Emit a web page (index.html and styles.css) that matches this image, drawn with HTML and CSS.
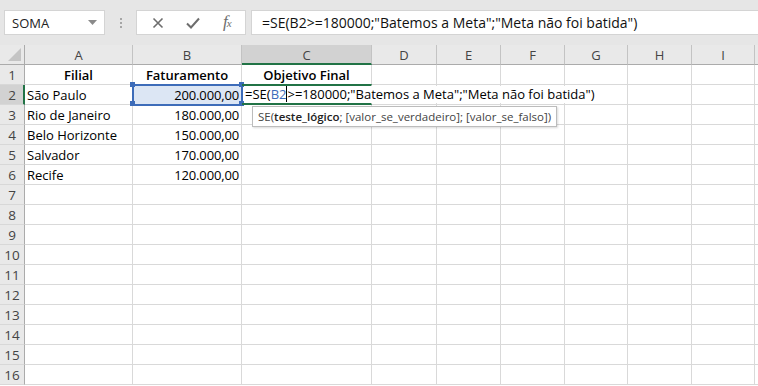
FILE: index.html
```html
<!doctype html>
<html lang="pt-BR">
  <head>
    <meta charset="UTF-8" />
    <title>Planilha - SE</title>
    <link rel="stylesheet" href="styles.css">
  </head>
  <body>
    <div class="app">
      <div class="toolbar">
        <div class="name-box">
          <span class="name-text">SOMA</span>
          <svg class="name-arrow" width="9" height="5" viewBox="0 0 9 5"><path d="M0 0h9L4.5 5z" fill="#8a8a8a"/></svg>
        </div>
        <div class="grip">
          <span></span><span></span><span></span>
        </div>
        <div class="fx-buttons">
          <svg class="fx-icon" width="12" height="12" viewBox="0 0 12 12"><path d="M1.5 1.5l9 9M10.5 1.5l-9 9" stroke="#6d6d6d" stroke-width="1.6" fill="none"/></svg>
          <svg class="fx-icon" width="14" height="12" viewBox="0 0 14 12"><path d="M1 6.5l4 4L13 1.5" stroke="#6d6d6d" stroke-width="2" fill="none"/></svg>
          <span class="fx-label">f<sub>x</sub></span>
        </div>
        <div class="formula-input">=SE(B2&gt;=180000;"Batemos a Meta";"Meta não foi batida")</div>
      </div>

      <div class="sheet">
        <div class="grid">
          <div class="hdr corner"><span class="corner-tri"></span></div>
          <div class="hdr col">A</div>
          <div class="hdr col">B</div>
          <div class="hdr col col-active">C</div>
          <div class="hdr col">D</div>
          <div class="hdr col">E</div>
          <div class="hdr col">F</div>
          <div class="hdr col">G</div>
          <div class="hdr col">H</div>
          <div class="hdr col">I</div>
          <div class="hdr col filler"></div>

          <div class="hdr row">1</div>
          <div class="cell bold center">Filial</div>
          <div class="cell bold center">Faturamento</div>
          <div class="cell bold center">Objetivo Final</div>
          <div class="cell"></div><div class="cell"></div><div class="cell"></div><div class="cell"></div><div class="cell"></div><div class="cell"></div><div class="cell"></div>

          <div class="hdr row row-active">2</div>
          <div class="cell">São Paulo</div>
          <div class="cell num ref-cell">200.000,00</div>
          <div class="cell edit-cell">
            <span class="edit-text">=SE(<span class="ref">B2</span><span class="caret"></span>&gt;=180000;"Batemos a Meta";"Meta não foi batida")</span>
            <div class="tooltip">SE(<b>teste_lógico</b>; [valor_se_verdadeiro]; [valor_se_falso])</div>
          </div>
          <div class="cell"></div><div class="cell"></div><div class="cell"></div><div class="cell"></div><div class="cell"></div><div class="cell"></div><div class="cell"></div>

          <div class="hdr row">3</div>
          <div class="cell">Rio de Janeiro</div>
          <div class="cell num">180.000,00</div>
          <div class="cell"></div><div class="cell"></div><div class="cell"></div><div class="cell"></div><div class="cell"></div><div class="cell"></div><div class="cell"></div><div class="cell"></div>

          <div class="hdr row">4</div>
          <div class="cell">Belo Horizonte</div>
          <div class="cell num">150.000,00</div>
          <div class="cell"></div><div class="cell"></div><div class="cell"></div><div class="cell"></div><div class="cell"></div><div class="cell"></div><div class="cell"></div><div class="cell"></div>

          <div class="hdr row">5</div>
          <div class="cell">Salvador</div>
          <div class="cell num">170.000,00</div>
          <div class="cell"></div><div class="cell"></div><div class="cell"></div><div class="cell"></div><div class="cell"></div><div class="cell"></div><div class="cell"></div><div class="cell"></div>

          <div class="hdr row">6</div>
          <div class="cell">Recife</div>
          <div class="cell num">120.000,00</div>
          <div class="cell"></div><div class="cell"></div><div class="cell"></div><div class="cell"></div><div class="cell"></div><div class="cell"></div><div class="cell"></div><div class="cell"></div>
        </div>
        <div class="grid empty-rows" id="emptyRows"></div>
      </div>
    </div>

    <script>
      // rows 7..16 are empty, build them instead of writing 100 divs
      const emptyRows = document.getElementById("emptyRows");
      for (let r = 7; r <= 16; r++) {
        const head = document.createElement("div");
        head.className = "hdr row";
        head.textContent = r;
        emptyRows.appendChild(head);
        for (let c = 0; c < 10; c++) {
          const cell = document.createElement("div");
          cell.className = "cell";
          emptyRows.appendChild(cell);
        }
      }
    </script>
  </body>
</html>
```

FILE: styles.css
```css
:root {
  --toolbar-bg: #e6e6e6;
  --header-bg: #e9e9e9;
  --header-active: #d2d2d2;
  --grid-line: #d9d9d9;
  --header-line: #c3c3c3;
  --excel-green: #217346;
  --ref-blue: #3d6cb9;
}

* {
  margin: 0;
  padding: 0;
  box-sizing: border-box;
}

body {
  font-family: "Open Sans", "Noto Sans", sans-serif;
  background-color: #fff;
  color: #000;
  overflow: hidden;
}

.app {
  width: 758px;
  height: 386px;
}

/* formula bar */

.toolbar {
  height: 45px;
  background-color: var(--toolbar-bg);
  display: flex;
  align-items: flex-start;
  padding-top: 10px;
  padding-left: 4px;
}

.name-box {
  width: 101px;
  height: 25px;
  background-color: #fff;
  border: 1px solid #d4d4d4;
  display: flex;
  align-items: center;
  justify-content: space-between;
  padding: 0 7px 0 7px;
}

.name-text {
  font-size: 13px;
  color: #222;
}

.grip {
  width: 31px;
  height: 25px;
  display: flex;
  flex-direction: column;
  align-items: center;
  justify-content: center;
  gap: 2px;
}

.grip span {
  width: 2px;
  height: 2px;
  background-color: #a6a6a6;
}

.fx-buttons {
  width: 110px;
  height: 25px;
  background-color: #fff;
  border: 1px solid #d4d4d4;
  display: flex;
  align-items: center;
  padding-left: 15px;
  gap: 22px;
}

.fx-label {
  font-family: "Liberation Serif", serif;
  font-style: italic;
  font-size: 17px;
  line-height: 17px;
  color: #6d6d6d;
  margin-left: 1px;
}

.fx-label sub {
  font-size: 11px;
  vertical-align: 0;
  margin-left: -1px;
}

.formula-input {
  flex: 1;
  height: 25px;
  margin-left: 5px;
  background-color: #fff;
  border: 1px solid #d4d4d4;
  border-right: none;
  font-size: 14px;
  line-height: 23px;
  padding-left: 10px;
  white-space: nowrap;
  color: #111;
}

/* sheet */

.grid {
  display: grid;
  grid-template-columns: 25px 108px 109px 130px 65px 64px 64px 63px 64px 63px 1fr;
  grid-auto-rows: 20px;
}

.hdr {
  background-color: var(--header-bg);
  color: #444;
  font-size: 13px;
  display: flex;
  align-items: center;
  justify-content: center;
}

.hdr.col {
  border-right: 1px solid var(--header-line);
  border-bottom: 1px solid #ababab;
}

.hdr.filler {
  border-right: none;
}

.hdr.col-active {
  background-color: var(--header-active);
  border-bottom: 2px solid var(--excel-green);
  padding-top: 1px;
}

.hdr.corner {
  border-right: 1px solid #ababab;
  border-bottom: 1px solid #ababab;
  position: relative;
}

.corner-tri {
  position: absolute;
  right: 3px;
  bottom: 3px;
  width: 0;
  height: 0;
  border-left: 13px solid transparent;
  border-bottom: 13px solid #c4c4c4;
}

.hdr.row {
  border-right: 1px solid #ababab;
  border-bottom: 1px solid #d8d8d8;
  font-size: 13.5px;
  padding-top: 1px;
}

.hdr.row-active {
  background-color: var(--header-active);
  border-right: 2px solid var(--excel-green);
  padding-left: 1px;
}

.cell {
  border-right: 1px solid var(--grid-line);
  border-bottom: 1px solid var(--grid-line);
  font-size: 13px;
  line-height: 18px;
  padding: 1px 2px 0;
  white-space: nowrap;
}

.cell.bold {
  font-weight: 600;
}

.cell.center {
  text-align: center;
}

.cell.num {
  text-align: right;
  letter-spacing: -0.15px;
}

/* B2 reference highlight */
.ref-cell {
  position: relative;
  background-color: #dce6f4;
  outline: 2px solid var(--ref-blue);
  outline-offset: -1px;
  z-index: 2;
}

.ref-cell::before,
.ref-cell::after {
  content: "";
  position: absolute;
  width: 5px;
  height: 5px;
  background-color: var(--ref-blue);
  top: -3px;
  left: -3px;
  box-shadow: 0 19px 0 var(--ref-blue);
}

.ref-cell::after {
  left: auto;
  right: -3px;
}

/* C2 in edit mode */
.edit-cell {
  position: relative;
  z-index: 3;
  border-top: 2px solid var(--excel-green);
  border-bottom: 2px solid var(--excel-green);
  margin-top: -1px;
  height: 21px;
  overflow: visible;
  padding: 0;
}

.edit-text {
  position: absolute;
  left: 3px;
  top: 0;
  height: 17px;
  line-height: 17px;
  background-color: #fff;
  padding-right: 4px;
  font-size: 13px;
}

.ref {
  color: var(--ref-blue);
}

.caret {
  display: inline-block;
  width: 1px;
  height: 16px;
  background-color: #000;
  vertical-align: -3px;
}

.tooltip {
  position: absolute;
  left: 10px;
  top: 20px;
  height: 21px;
  padding: 0 5px;
  background-color: #fff;
  border: 1px solid #bcbcbc;
  box-shadow: 1px 1px 2px rgba(0, 0, 0, 0.15);
  font-size: 11.5px;
  line-height: 19px;
  color: #444;
  white-space: nowrap;
}

.tooltip b {
  color: #222;
  font-weight: 600;
}
```
